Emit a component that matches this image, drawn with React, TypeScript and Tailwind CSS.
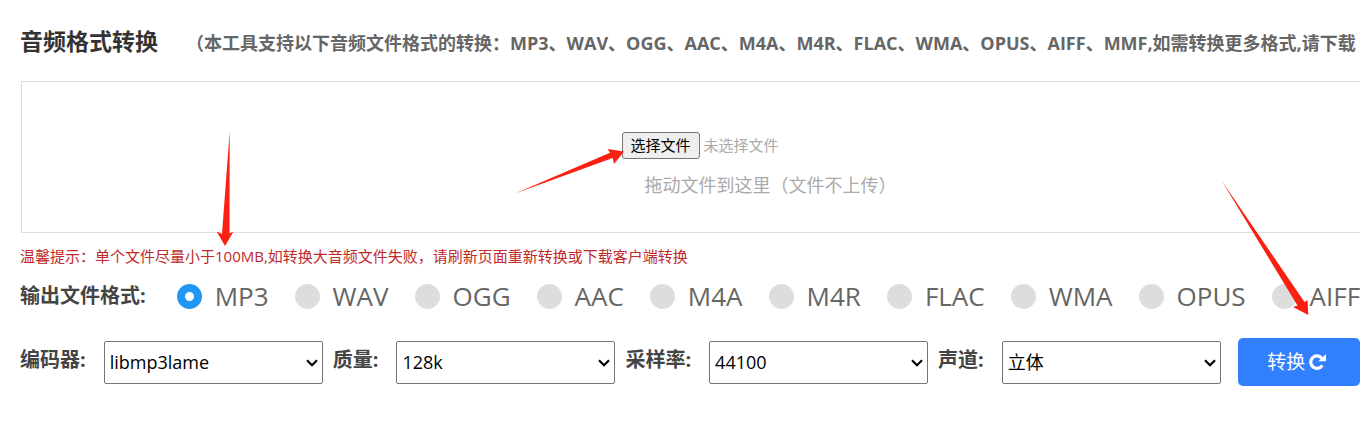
import { useRef, useState } from "react";

const FORMATS = ["MP3", "WAV", "OGG", "AAC", "M4A", "M4R", "FLAC", "WMA", "OPUS", "AIFF"];

const SETTINGS = [
  { id: "codec", label: "编码器:", options: ["libmp3lame"] },
  { id: "quality", label: "质量:", options: ["128k", "192k", "320k"] },
  { id: "rate", label: "采样率:", options: ["44100", "48000"] },
  { id: "channel", label: "声道:", options: ["立体", "单声道"] },
];

// Tapered red pointers laid over the page: drop-box tip, file button, convert button.
function Pointers() {
  return (
    <svg
      className="pointer-events-none absolute left-0 top-0"
      width="1360"
      height="422"
      fill="#fb2012"
      aria-hidden="true"
    >
      <path d="M229.7 131L229.500 233.5L233.5 231.5L225 246L216.7 231.5L222 234Z" />
      <path d="M515 193.500L610 152.700L607.500 149L624 151.500L614 164L612.700 158Z" />
      <path d="M1221.500 180.500L1304.500 302L1307.500 300L1308.300 315L1293 307L1297.500 305.500Z" />
    </svg>
  );
}

function RepeatIcon() {
  return (
    <svg className="h-4 w-[17px]" viewBox="0 0 17 16" aria-hidden="true">
      <path d="M12.700 4.200A6.200 6.200 0 1 0 13.200 11.400" fill="none" stroke="currentColor" strokeWidth="3.200" />
      <path d="M17 0V7.200H9.400Z" fill="currentColor" />
    </svg>
  );
}

export default function App() {
  const [format, setFormat] = useState("MP3");
  const fileRef = useRef<HTMLInputElement>(null);

  return (
    <div className="relative overflow-x-clip bg-white font-['Open_Sans','Noto_Sans_CJK_SC',sans-serif] whitespace-nowrap">
      <main className="-mr-40 pl-5 pt-[23px] pb-9">
        <header className="flex items-baseline gap-7">
          <h1 className="text-[23px] leading-9 font-bold text-[#333]">音频格式转换</h1>
          <h2 className="text-[18px] leading-9 font-bold text-[#666]">
            （本工具支持以下音频文件格式的转换：MP3、WAV、OGG、AAC、M4A、M4R、FLAC、WMA、OPUS、AIFF、MMF,如需转换更多格式,请下载
          </h2>
        </header>

        <section className="mt-5 ml-px flex flex-col items-center gap-3 border border-[#ddd] pt-[50px] pb-[33px] text-[#aaa]">
          <div className="flex w-[298px] items-center gap-1 text-[15px]">
            <button
              type="button"
              onClick={() => fileRef.current?.click()}
              className="h-[27px] rounded-[3px] border border-[#767676] bg-[#efefef] px-2 text-black"
            >
              选择文件
            </button>
            <span>未选择文件</span>
            <input ref={fileRef} type="file" aria-label="选择文件" className="hidden" />
          </div>
          <p className="text-[18px] leading-7">拖动文件到这里（文件不上传）</p>
        </section>

        <p className="mt-[11px] text-[15px] leading-6 text-[#c02a2a]">
          温馨提示：单个文件尽量小于100MB,如转换大音频文件失败，请刷新页面重新转换或下载客户端转换
        </p>

        <fieldset className="mt-2 flex items-center">
          <legend className="float-left mr-[31px] text-[20px] leading-10 font-bold text-[#444]">输出文件格式:</legend>
          <div className="flex items-center gap-[26px]">
            {FORMATS.map((name) => (
              <label key={name} className="flex items-center gap-[13px] text-[26px] leading-10 text-[#666]">
                <input
                  type="radio"
                  name="format"
                  value={name}
                  checked={format === name}
                  onChange={() => setFormat(name)}
                  className="size-[25px] appearance-none rounded-full bg-[#ddd] checked:border-8 checked:border-[#2196f3] checked:bg-white"
                />
                {name}
              </label>
            ))}
          </div>
        </fieldset>

        <div className="mt-[22px] flex items-center">
          {SETTINGS.map(({ id, label, options }) => (
            <div key={id} className="mr-[10px] flex items-center gap-[18px]">
              <label htmlFor={id} className="pb-1 text-[20px] font-bold text-[#444]">
                {label}
              </label>
              <div className="relative">
                <select
                  id={id}
                  className="h-[43px] w-[219px] appearance-none rounded-[2px] border border-[#767676] bg-white px-[5px] text-[18px] text-black"
                >
                  {options.map((o) => (
                    <option key={o}>{o}</option>
                  ))}
                </select>
                <svg
                  className="pointer-events-none absolute top-[18px] right-[5px] h-2 w-3"
                  viewBox="0 0 12 8"
                  fill="none"
                  stroke="#000"
                  strokeWidth="2.200"
                  aria-hidden="true"
                >
                  <path d="M1 1.300L6 6.300L11 1.300" />
                </svg>
              </div>
            </div>
          ))}
          <button
            type="button"
            className="ml-[7px] flex h-12 w-[122px] items-center justify-center gap-1 rounded-[5px] bg-[#3380ff] pr-1 text-[19px] text-white"
          >
            转换
            <RepeatIcon />
          </button>
        </div>
      </main>
      <Pointers />
    </div>
  );
}
